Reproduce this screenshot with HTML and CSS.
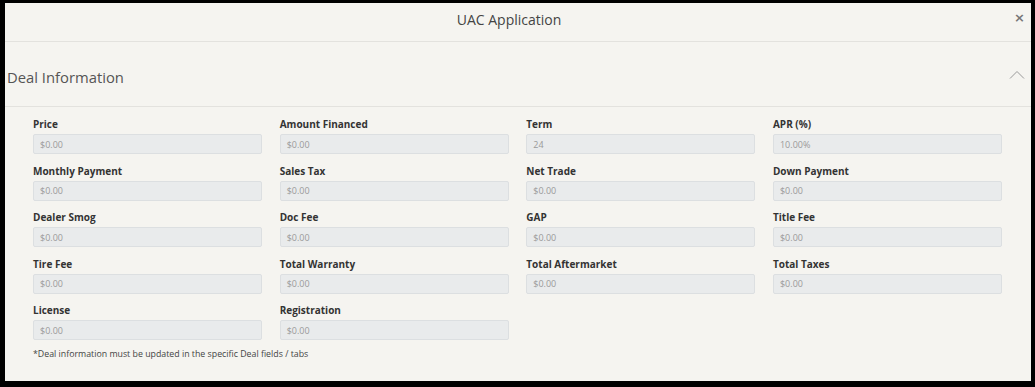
FILE: index.html
```html
<!DOCTYPE html>
<html>
<head>
<meta charset="utf-8">
<link rel="stylesheet" href="styles.css">
</head>
<body>
<div class="modal">
  <div class="modal-header">
    <div class="modal-title">UAC Application</div>
    <button class="close">&times;</button>
  </div>
  <div class="section-header">
    <div class="section-title">Deal Information</div>
    <svg class="chevron" width="16" height="10" viewBox="0 0 16 10"><path d="M1 8.5 L8 1.5 L15 8.5" fill="none" stroke="#9a9a9a" stroke-width="1"/></svg>
  </div>
  <div class="section-body">
    <div class="grid">
      <div class="field"><label>Price</label><div class="input">$0.00</div></div>
      <div class="field"><label>Amount Financed</label><div class="input">$0.00</div></div>
      <div class="field"><label>Term</label><div class="input">24</div></div>
      <div class="field"><label>APR (%)</label><div class="input">10.00%</div></div>
      <div class="field"><label>Monthly Payment</label><div class="input">$0.00</div></div>
      <div class="field"><label>Sales Tax</label><div class="input">$0.00</div></div>
      <div class="field"><label>Net Trade</label><div class="input">$0.00</div></div>
      <div class="field"><label>Down Payment</label><div class="input">$0.00</div></div>
      <div class="field"><label>Dealer Smog</label><div class="input">$0.00</div></div>
      <div class="field"><label>Doc Fee</label><div class="input">$0.00</div></div>
      <div class="field"><label>GAP</label><div class="input">$0.00</div></div>
      <div class="field"><label>Title Fee</label><div class="input">$0.00</div></div>
      <div class="field"><label>Tire Fee</label><div class="input">$0.00</div></div>
      <div class="field"><label>Total Warranty</label><div class="input">$0.00</div></div>
      <div class="field"><label>Total Aftermarket</label><div class="input">$0.00</div></div>
      <div class="field"><label>Total Taxes</label><div class="input">$0.00</div></div>
      <div class="field"><label>License</label><div class="input">$0.00</div></div>
      <div class="field"><label>Registration</label><div class="input">$0.00</div></div>
    </div>
    <p class="note">*Deal information must be updated in the specific Deal fields / tabs</p>
  </div>
</div>
</body>
</html>
```

FILE: styles.css
```css
* { box-sizing: border-box; }
html, body { margin: 0; padding: 0; }
body {
  width: 1035px;
  height: 387px;
  font-family: "Open Sans", "Liberation Sans", sans-serif;
  color: #333;
  overflow: hidden;
}
.modal {
  width: 1035px;
  height: 387px;
  background: #f5f4f0;
  border-style: solid;
  border-color: #000;
  border-width: 3px 4px 6px 5px;
  display: flex;
  flex-direction: column;
}
.modal-header {
  height: 39px;
  border-bottom: 1px solid #e3e2de;
  display: flex;
  align-items: center;
  justify-content: center;
  position: relative;
}
.modal-title {
  font-size: 14px;
  color: #444;
  margin-top: -6px;
  margin-right: 18px;
}
.close {
  position: absolute;
  right: 6px;
  top: 8px;
  border: none;
  background: none;
  padding: 0;
  font-size: 13px;
  font-weight: bold;
  color: #777;
  line-height: 1;
  font-family: "DejaVu Sans", sans-serif;
}
.section-header {
  height: 65px;
  border-bottom: 1px solid #e3e2de;
  display: flex;
  align-items: center;
  justify-content: space-between;
  padding: 0 6px 0 2px;
}
.section-title {
  font-size: 14.8px;
  color: #555;
  margin-top: 6px;
}
.chevron { margin-top: 2px; }
.section-body {
  padding: 10px 29px 0 28px;
}
.grid {
  display: grid;
  grid-template-columns: repeat(4, 229px);
  column-gap: 17.67px;
  row-gap: 9.5px;
}
.field { display: flex; flex-direction: column; }
.field label {
  font-size: 10px;
  font-weight: 700;
  line-height: 14px;
  height: 14px;
  margin-bottom: 3px;
  color: #333;
}
.input {
  height: 20px;
  background: #e9ebec;
  border: 1px solid #dcdfe1;
  border-radius: 2px;
  font-size: 9px;
  color: #9a9a9a;
  padding-left: 6px;
  display: flex;
  align-items: center;
}
.note {
  margin: 9px 0 0 0;
  font-size: 8.8px;
  line-height: 11px;
  color: #444;
}
```
